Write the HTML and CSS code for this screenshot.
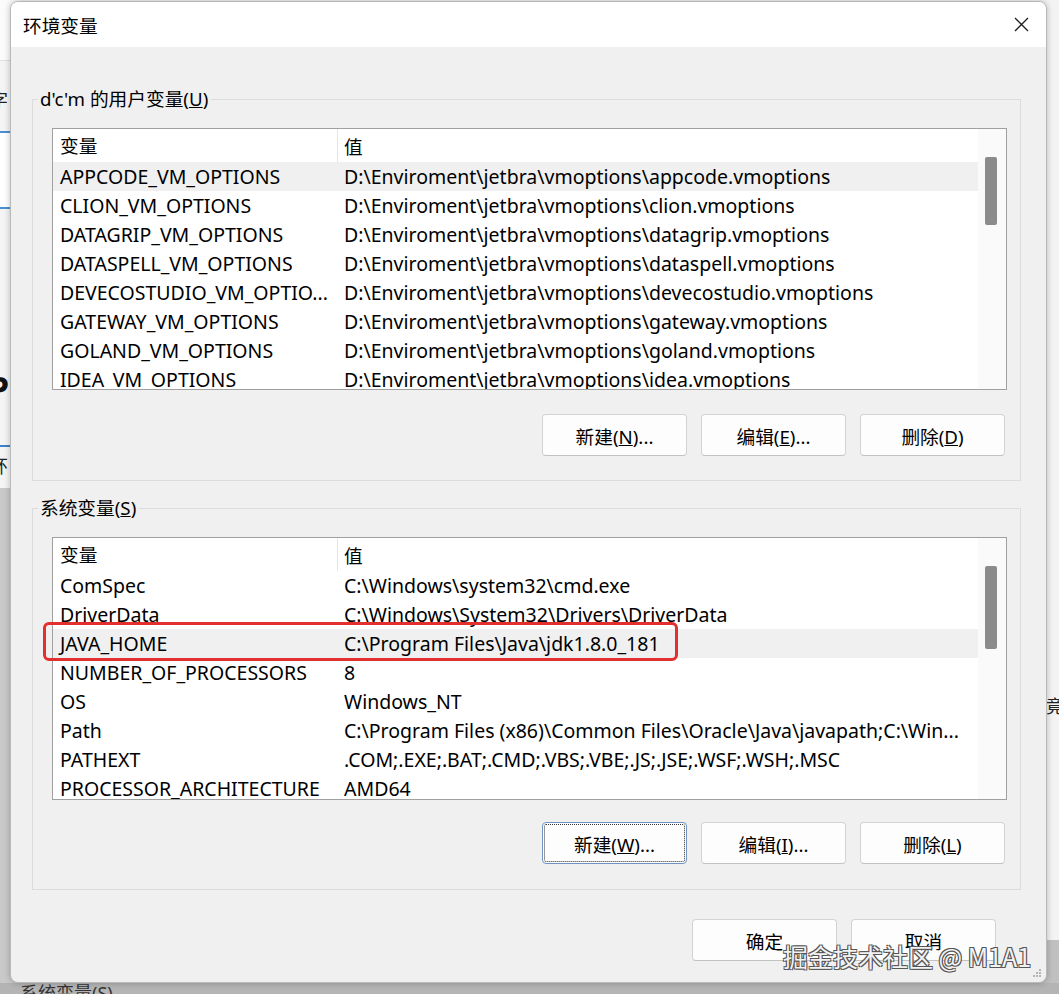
FILE: index.html
```html
<!DOCTYPE html>
<html lang="zh-CN">
<head>
  <meta charset="UTF-8" />
  <meta name="viewport" content="width=device-width, initial-scale=1.0" />
  <title>环境变量</title>
  <link rel="stylesheet" href="styles.css">
</head>
<body>

  <!-- window behind the dialog -->
  <div class="behind">
    <div class="bh-top"></div>
    <div class="bh-char bh-zi">字</div>
    <div class="bh-select"></div>
    <div class="bh-big">P</div>
    <div class="bh-line"></div>
    <div class="bh-char bh-huan">环</div>
    <div class="bh-grey"></div>
    <div class="bh-right"></div>
    <div class="bh-char bh-jing">竟</div>
    <div class="bh-bottom"><span>系统变量(S)</span></div>
  </div>

  <div class="dialog">
    <div class="titlebar">
      <span class="title">环境变量</span>
      <span class="close">
        <svg width="15" height="15" viewBox="0 0 15 15"><path d="M1 1L14 14M14 1L1 14" stroke="#1f1f1f" stroke-width="1.3" fill="none"/></svg>
      </span>
    </div>

    <div class="content">
      <fieldset class="group">
        <legend>d'c'm 的用户变量(<u>U</u>)</legend>
        <div class="list list-user">
          <div class="table">
            <div class="head"><span class="c1">变量</span><span class="c2">值</span></div>
            <div class="row sel"><span class="c1">APPCODE_VM_OPTIONS</span><span class="c2">D:\Enviroment\jetbra\vmoptions\appcode.vmoptions</span></div>
            <div class="row"><span class="c1">CLION_VM_OPTIONS</span><span class="c2">D:\Enviroment\jetbra\vmoptions\clion.vmoptions</span></div>
            <div class="row"><span class="c1">DATAGRIP_VM_OPTIONS</span><span class="c2">D:\Enviroment\jetbra\vmoptions\datagrip.vmoptions</span></div>
            <div class="row"><span class="c1">DATASPELL_VM_OPTIONS</span><span class="c2">D:\Enviroment\jetbra\vmoptions\dataspell.vmoptions</span></div>
            <div class="row"><span class="c1">DEVECOSTUDIO_VM_OPTIO...</span><span class="c2">D:\Enviroment\jetbra\vmoptions\devecostudio.vmoptions</span></div>
            <div class="row"><span class="c1">GATEWAY_VM_OPTIONS</span><span class="c2">D:\Enviroment\jetbra\vmoptions\gateway.vmoptions</span></div>
            <div class="row"><span class="c1">GOLAND_VM_OPTIONS</span><span class="c2">D:\Enviroment\jetbra\vmoptions\goland.vmoptions</span></div>
            <div class="row"><span class="c1">IDEA_VM_OPTIONS</span><span class="c2">D:\Enviroment\jetbra\vmoptions\idea.vmoptions</span></div>
          </div>
          <div class="scroll"><div class="thumb thumb-user"></div></div>
        </div>
        <div class="btn-row">
          <button>新建(<u>N</u>)...</button>
          <button>编辑(<u>E</u>)...</button>
          <button>删除(<u>D</u>)</button>
        </div>
      </fieldset>

      <fieldset class="group group-sys">
        <legend>系统变量(<u>S</u>)</legend>
        <div class="list list-sys">
          <div class="table">
            <div class="head"><span class="c1">变量</span><span class="c2">值</span></div>
            <div class="row"><span class="c1">ComSpec</span><span class="c2">C:\Windows\system32\cmd.exe</span></div>
            <div class="row"><span class="c1">DriverData</span><span class="c2">C:\Windows\System32\Drivers\DriverData</span></div>
            <div class="row sel"><span class="c1">JAVA_HOME</span><span class="c2">C:\Program Files\Java\jdk1.8.0_181</span></div>
            <div class="row"><span class="c1">NUMBER_OF_PROCESSORS</span><span class="c2">8</span></div>
            <div class="row"><span class="c1">OS</span><span class="c2">Windows_NT</span></div>
            <div class="row"><span class="c1">Path</span><span class="c2">C:\Program Files (x86)\Common Files\Oracle\Java\javapath;C:\Win...</span></div>
            <div class="row"><span class="c1">PATHEXT</span><span class="c2">.COM;.EXE;.BAT;.CMD;.VBS;.VBE;.JS;.JSE;.WSF;.WSH;.MSC</span></div>
            <div class="row"><span class="c1">PROCESSOR_ARCHITECTURE</span><span class="c2">AMD64</span></div>
          </div>
          <div class="scroll"><div class="thumb thumb-sys"></div></div>
        </div>
        <div class="btn-row btn-row-sys">
          <button class="focused">新建(<u>W</u>)...</button>
          <button>编辑(<u>I</u>)...</button>
          <button>删除(<u>L</u>)</button>
        </div>
      </fieldset>

      <div class="footer">
        <button>确定</button>
        <button>取消</button>
      </div>
    </div>

    <svg class="grip" width="10" height="10" viewBox="0 0 10 10">
      <rect x="7" y="1" width="2" height="2" fill="#b5b5b5"/>
      <rect x="4" y="4" width="2" height="2" fill="#b5b5b5"/>
      <rect x="7" y="4" width="2" height="2" fill="#b5b5b5"/>
      <rect x="1" y="7" width="2" height="2" fill="#b5b5b5"/>
      <rect x="4" y="7" width="2" height="2" fill="#b5b5b5"/>
      <rect x="7" y="7" width="2" height="2" fill="#b5b5b5"/>
    </svg>
  </div>

  <div class="highlight"></div>
  <div class="watermark">掘金技术社区 @ M1A1</div>

</body>
</html>
```

FILE: styles.css
```css
body {
  margin: 0;
  width: 1059px;
  height: 994px;
  position: relative;
  overflow: hidden;
  background: #f4f4f4;
  font-family: "Noto Sans", "Noto Sans CJK SC", sans-serif;
  color: #000;
}

/* background window */
.behind div {
  position: absolute;
}
.bh-top {
  left: 0; top: 0;
  width: 20px; height: 60px;
  background: #fbfbfb;
  border-bottom: 1px solid #e0e0e0;
}
.bh-char {
  font-size: 18px;
  color: #222;
}
.bh-zi { left: -10px; top: 86px; }
.bh-huan { left: -10px; top: 452px; }
.bh-jing { left: 1046px; top: 692px; }
.bh-select {
  left: -4px; top: 131px;
  width: 12px; height: 74px;
  background: #fff;
  border: 2px solid #4a90d0;
}
.bh-big {
  left: -12px; top: 365px;
  font-size: 34px;
  font-weight: bold;
  color: #111;
}
.bh-line {
  left: 0; top: 445px;
  width: 20px; height: 2px;
  background: #3b82c9;
}
.bh-grey {
  left: 0; top: 488px;
  width: 20px; height: 506px;
  background: #c9c9c9;
}
.bh-right {
  left: 1040px; top: 0;
  width: 19px; height: 994px;
  background: linear-gradient(#f3f3f3 940px, #c0c0c0 940px);
}
.bh-bottom {
  left: 0; top: 983px;
  width: 1059px; height: 11px;
  background: #b4b4b4;
  overflow: hidden;
}
.bh-bottom span {
  position: absolute;
  left: 20px; top: -4px;
  font-size: 18px;
  color: #333;
}

/* dialog */
.dialog {
  position: absolute;
  left: 10px;
  top: 1px;
  width: 1037px;
  height: 982px;
  box-sizing: border-box;
  background: #f0f0f0;
  border: 1px solid #b9b9b9;
  border-radius: 8px;
  box-shadow: 0 0 6px rgba(0,0,0,0.25);
  overflow: hidden;
}
.titlebar {
  height: 45px;
  background: #fff;
  display: flex;
  align-items: center;
  justify-content: space-between;
  padding: 0 17px 0 12px;
}
.title {
  font-size: 18.7px;
}
.close {
  display: flex;
}
.content {
  padding: 40px 25px 0 21px;
}

.group {
  margin: 0;
  padding: 17px 13px 24px 19px;
  border: 1px solid #dcdcdc;
  min-width: 0;
}
.group legend {
  font-size: 18.7px;
  line-height: 24px;
  padding: 0 3px 0 2px;
  margin-left: -14px;
}
.group-sys {
  margin-top: 15px;
  padding-bottom: 25px;
}

.list {
  display: flex;
  height: 262px;
  box-sizing: border-box;
  background: #fff;
  border: 1px solid #a0a0a0;
  overflow: hidden;
}
.list-sys {
  height: 263px;
}
.table {
  flex: 1;
  overflow: hidden;
  font-size: 18.7px;
}
.head, .row {
  display: flex;
  white-space: nowrap;
}
.head {
  height: 33px;
  align-items: center;
}
.head .c1 {
  border-right: 1px solid #e5e5e5;
  height: 33px;
  line-height: 33px;
}
.row {
  height: 29px;
  line-height: 29px;
  font-size: 19.5px;
}
.row.sel {
  background: #f0f0f0;
}
.c1 {
  width: 285px;
  padding-left: 7px;
  box-sizing: border-box;
}
.c2 {
  padding-left: 6px;
}
.scroll {
  width: 28px;
  background: #fafafa;
  position: relative;
}
.thumb {
  position: absolute;
  left: 7px;
  width: 12px;
  background: #8b8b8b;
  border-radius: 2px;
}
.thumb-user { top: 28px; height: 68px; }
.thumb-sys { top: 28px; height: 83px; }

button {
  width: 145px;
  height: 42px;
  font-family: inherit;
  font-size: 18.7px;
  color: #000;
  background: #fdfdfd;
  border: 1px solid #d3d3d3;
  border-bottom-color: #c2c2c2;
  border-radius: 4px;
  padding: 0;
}
button.focused {
  border-color: #6f94c4;
  outline: 1px dotted #333;
  outline-offset: -3px;
}
.btn-row {
  display: flex;
  justify-content: flex-end;
  gap: 14px;
  margin-top: 24px;
  margin-right: 2px;
}
.btn-row-sys {
  margin-top: 22px;
}
.footer {
  display: flex;
  justify-content: flex-end;
  gap: 14px;
  margin-top: 29px;
  margin-right: 25px;
}

.grip {
  position: absolute;
  right: 4px;
  bottom: 4px;
}

/* annotation + watermark */
.highlight {
  position: absolute;
  left: 43px;
  top: 622px;
  width: 635px;
  height: 39px;
  box-sizing: border-box;
  border: 3px solid #e2302e;
  border-radius: 6px;
}
.watermark {
  position: absolute;
  left: 783px;
  top: 938px;
  font-size: 25px;
  color: #f2f2f2;
  font-family: "Noto Sans CJK SC", sans-serif;
  text-shadow: 1px 1px 0 #555, -1px -1px 0 #555, 1px -1px 0 #555, -1px 1px 0 #555;
  white-space: nowrap;
}
```
